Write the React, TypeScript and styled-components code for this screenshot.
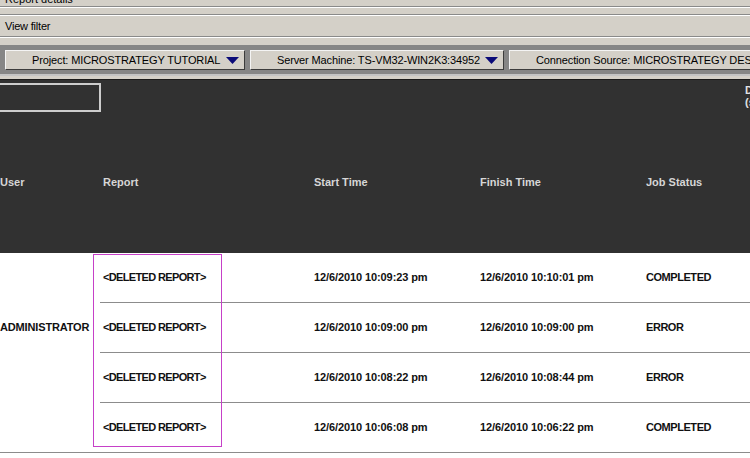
import React from "react";
import styled, { createGlobalStyle } from "styled-components";

const GlobalStyle = createGlobalStyle`
  html, body {
    margin: 0;
    padding: 0;
    background: #ffffff;
  }
  body {
    font-family: "Liberation Sans", Arial, sans-serif;
    overflow: hidden;
  }
`;

const Page = styled.div`
  width: 750px;
  height: 458px;
  overflow: hidden;
  display: flex;
  flex-direction: column;
  background: #ffffff;
`;

/* ---------- window chrome above the grid ---------- */

const Chrome = styled.div`
  display: flex;
  flex-direction: column;
  background: #d4d0c8;
  font-size: 11px;
  color: #000000;
`;

const SectionTitle = styled.div`
  height: 6px;
  overflow: hidden;
  display: flex;
  align-items: flex-end;
  padding-left: 5px;
  line-height: 13px;
`;

const Etched = styled.div`
  height: 0;
  border-top: 1px solid #8a8a8a;
  border-bottom: 1px solid #ffffff;
`;

const Spacer = styled.div<{ $h: number }>`
  height: ${(p) => p.$h}px;
`;

const FilterRow = styled.div`
  height: 20px;
  display: flex;
  align-items: center;
  padding-left: 5px;
  letter-spacing: -0.2px;
`;

const Toolbar = styled.div`
  height: 29px;
  box-sizing: border-box;
  background: #868686;
  display: flex;
  gap: 5px;
  padding: 5px 0 0 5px;
  overflow: hidden;
`;

const DropButton = styled.button<{ $w: number }>`
  flex: none;
  width: ${(p) => p.$w}px;
  height: 20px;
  box-sizing: border-box;
  display: flex;
  align-items: center;
  padding: 0 5px 0 26px;
  margin: 0;
  background: #d4d0c8;
  border: 1px solid;
  border-color: #f4f4f4 #3c3c3c #3c3c3c #f4f4f4;
  font-family: "Liberation Sans", Arial, sans-serif;
  font-size: 11px;
  letter-spacing: -0.13px;
  color: #000000;
  white-space: nowrap;
  overflow: hidden;
  cursor: default;
`;

const ButtonLabel = styled.span`
  flex: 1;
  text-align: left;
`;

const Caret = () => (
  <svg width="13" height="7" viewBox="0 0 13 7" style={{ flex: "none" }}>
    <polygon points="0,0 13,0 6.5,7" fill="#0b0b78" />
  </svg>
);

const ChromeFoot = styled.div`
  height: 6px;
  box-sizing: border-box;
  background: #d4d0c8;
  border-top: 2px solid #c4c4c4;
  border-bottom: 1px solid #1a1a1a;
`;

/* ---------- job grid ---------- */

const columns = "100px 211px 166px 166px 99px 1fr";

const HeaderBand = styled.div`
  height: 173px;
  background: #313131;
  display: grid;
  grid-template-columns: ${columns};
  grid-template-rows: 32px 141px;
  overflow: hidden;
`;

const TitleBox = styled.div`
  grid-column: 1;
  grid-row: 1;
  margin: 3px 0 0 -4px;
  width: 105px;
  height: 29px;
  box-sizing: border-box;
  border: 2px solid #cdcdcd;
`;

const HeadLabel = styled.div<{ $col: number; $pad?: number }>`
  grid-column: ${(p) => p.$col};
  grid-row: 2;
  align-self: start;
  padding: 64px 0 0 ${(p) => p.$pad ?? 3}px;
  font-size: 11px;
  font-weight: bold;
  line-height: 13px;
  color: #d6d6d6;
  white-space: nowrap;
`;

const SideLabel = styled.div`
  grid-column: 6;
  grid-row: 1 / span 2;
  align-self: start;
  padding: 4px 0 0 3px;
  font-size: 11px;
  font-weight: bold;
  line-height: 12px;
  color: #e2e2e2;
  white-space: nowrap;
`;

const Body = styled.div`
  position: relative;
  display: grid;
  grid-template-columns: ${columns};
  grid-auto-rows: 50px;
  background: #ffffff;
`;

const Cell = styled.div<{ $pad?: number; $track?: number }>`
  box-sizing: border-box;
  display: flex;
  align-items: center;
  padding: 0 0 2px ${(p) => p.$pad ?? 3}px;
  border-bottom: 1px solid #8c8c8c;
  font-size: 11px;
  font-weight: bold;
  letter-spacing: ${(p) => p.$track ?? 0}px;
  color: #111111;
  white-space: nowrap;
  overflow: hidden;
`;

const UserCell = styled.div`
  grid-column: 1;
  grid-row: 1 / span 3;
  display: flex;
  align-items: center;
  padding-bottom: 2px;
  font-size: 11px;
  font-weight: bold;
  letter-spacing: -0.15px;
  color: #111111;
  white-space: nowrap;
`;

const Highlight = styled.div`
  position: absolute;
  left: 93px;
  top: 1px;
  width: 129px;
  height: 193px;
  box-sizing: border-box;
  border: 1px solid #c640c8;
  pointer-events: none;
`;

type Job = { report: string; start: string; finish: string; status: string };

const jobs: Job[] = [
  { report: "<DELETED REPORT>", start: "12/6/2010 10:09:23 pm", finish: "12/6/2010 10:10:01 pm", status: "COMPLETED" },
  { report: "<DELETED REPORT>", start: "12/6/2010 10:09:00 pm", finish: "12/6/2010 10:09:00 pm", status: "ERROR" },
  { report: "<DELETED REPORT>", start: "12/6/2010 10:08:22 pm", finish: "12/6/2010 10:08:44 pm", status: "ERROR" },
  { report: "<DELETED REPORT>", start: "12/6/2010 10:06:08 pm", finish: "12/6/2010 10:06:22 pm", status: "COMPLETED" },
];

export default function App() {
  return (
    <>
      <GlobalStyle />
      <Page>
        <Chrome>
          <SectionTitle>Report details</SectionTitle>
          <Etched />
          <Spacer $h={6} />
          <Etched />
          <FilterRow>View filter</FilterRow>
          <Etched />
          <Spacer $h={7} />
          <Toolbar>
            <DropButton $w={240}>
              <ButtonLabel>Project: MICROSTRATEGY TUTORIAL</ButtonLabel>
              <Caret />
            </DropButton>
            <DropButton $w={254}>
              <ButtonLabel>Server Machine: TS-VM32-WIN2K3:34952</ButtonLabel>
              <Caret />
            </DropButton>
            <DropButton $w={300}>
              <ButtonLabel>Connection Source: MICROSTRATEGY DESKTOP</ButtonLabel>
              <Caret />
            </DropButton>
          </Toolbar>
          <ChromeFoot />
        </Chrome>

        <HeaderBand>
          <TitleBox />
          <HeadLabel $col={1} $pad={0}>User</HeadLabel>
          <HeadLabel $col={2}>Report</HeadLabel>
          <HeadLabel $col={3}>Start Time</HeadLabel>
          <HeadLabel $col={4}>Finish Time</HeadLabel>
          <HeadLabel $col={5}>Job Status</HeadLabel>
          <SideLabel>
            Duration
            <br />
            (secs)
          </SideLabel>
        </HeaderBand>

        <Body>
          <UserCell>ADMINISTRATOR</UserCell>
          {jobs.map((job, i) => (
            <React.Fragment key={i}>
              {i === jobs.length - 1 && <Cell $pad={0} />}
              <Cell $track={-0.65}>{job.report}</Cell>
              <Cell $track={-0.1}>{job.start}</Cell>
              <Cell $track={-0.1}>{job.finish}</Cell>
              <Cell $track={-0.45}>{job.status}</Cell>
              <Cell />
            </React.Fragment>
          ))}
          <Highlight />
        </Body>
      </Page>
    </>
  );
}
